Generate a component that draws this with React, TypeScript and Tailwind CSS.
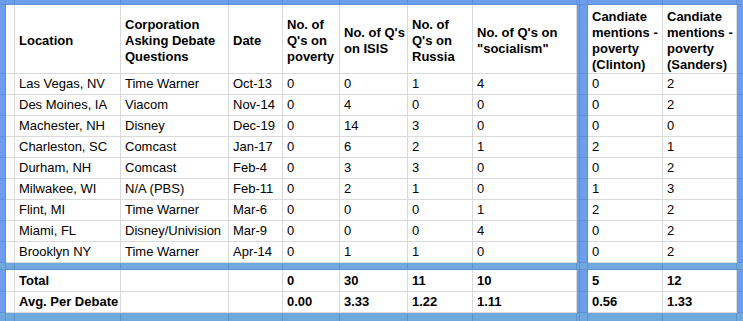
import React from "react";

type Kind = "w" | "vb" | "hb";

const colKinds: ("w" | "b")[] = ["b", "w", "w", "w", "w", "w", "w", "w", "w", "b", "b", "w", "w", "b"];

const header: string[][] = [
  [],
  [],
  ["Location"],
  ["Corporation", "Asking Debate", "Questions"],
  ["Date"],
  ["No. of", "Q's on", "poverty"],
  ["No. of Q's", "on ISIS"],
  ["No. of", "Q's on", "Russia"],
  ["No. of Q's on", "\"socialism\""],
  [],
  [],
  ["Candiate", "mentions -", "poverty", "(Clinton)"],
  ["Candiate", "mentions -", "poverty", "(Sanders)"],
  [],
];

const data: string[][] = [
  ["Las Vegas, NV", "Time Warner", "Oct-13", "0", "0", "1", "4", "0", "2"],
  ["Des Moines, IA", "Viacom", "Nov-14", "0", "4", "0", "0", "0", "2"],
  ["Machester, NH", "Disney", "Dec-19", "0", "14", "3", "0", "0", "0"],
  ["Charleston, SC", "Comcast", "Jan-17", "0", "6", "2", "1", "2", "1"],
  ["Durham, NH", "Comcast", "Feb-4", "0", "3", "3", "0", "0", "2"],
  ["Milwakee, WI", "N/A (PBS)", "Feb-11", "0", "2", "1", "0", "1", "3"],
  ["Flint, MI", "Time Warner", "Mar-6", "0", "0", "0", "1", "2", "2"],
  ["Miami, FL", "Disney/Univision", "Mar-9", "0", "0", "0", "4", "0", "2"],
  ["Brooklyn NY", "Time Warner", "Apr-14", "0", "1", "1", "0", "0", "2"],
];

const totals = ["Total", "", "", "0", "30", "11", "10", "5", "12"];
const avgs = ["Avg. Per Debate", "", "", "0.00", "3.33", "1.22", "1.11", "0.56", "1.33"];

// map a 9-value data row into 14 columns
function expand(vals: string[]): string[] {
  return ["", "", vals[0], vals[1], vals[2], vals[3], vals[4], vals[5], vals[6], "", "", vals[7], vals[8], ""];
}

function Cell({
  kind,
  lastCol,
  lastRow,
  children,
  variant,
}: {
  kind: Kind;
  lastCol: boolean;
  lastRow: boolean;
  children?: React.ReactNode;
  variant: "head" | "body" | "bold" | "none";
}) {
  const bg =
    kind === "w"
      ? "bg-white border-[#dadada]"
      : kind === "vb"
      ? "bg-[#6d9eeb] border-[#5e8fdc]"
      : "bg-[#6fa8dc] border-[#5d95cb]";
  const br = lastCol ? "" : "border-r";
  const bb = lastRow ? "" : "border-b";
  const layout =
    variant === "head"
      ? "flex flex-col justify-center pt-[3px] pl-[4px] font-bold leading-[16px]"
      : variant === "body"
      ? "flex items-end pb-[2px] pl-[4px] leading-[16px]"
      : variant === "bold"
      ? "flex items-end pb-[2px] pl-[4px] font-bold leading-[16px]"
      : "";
  return (
    <div className={`${bg} ${br} ${bb} ${layout} overflow-hidden whitespace-nowrap`}>{children}</div>
  );
}

export default function App() {
  const rows: { type: "topblue" | "head" | "body" | "band" | "bold" | "bottom"; vals?: string[] }[] = [
    { type: "topblue" },
    { type: "head" },
    ...data.map((d) => ({ type: "body" as const, vals: expand(d) })),
    { type: "band" },
    { type: "bold", vals: expand(totals) },
    { type: "bold", vals: expand(avgs) },
    { type: "bottom" },
  ];

  return (
    <div
      className="w-[743px] h-[321px] overflow-hidden text-[13px] text-black"
      style={{ fontFamily: '"Liberation Sans", Arial, sans-serif' }}
    >
      <div className="grid grid-cols-[6px_9px_106px_108px_54px_57px_68px_65px_104px_3px_8px_75px_74px_6px] grid-rows-[5px_69px_21px_21px_21px_21px_21px_21px_21px_21px_21px_7px_22px_21px_8px]">
        {rows.map((r, ri) =>
          colKinds.map((ck, ci) => {
            const lastCol = ci === colKinds.length - 1;
            const lastRow = ri === rows.length - 1;
            let kind: Kind = "w";
            if (ck === "b") kind = "vb";
            if (r.type === "topblue") kind = "vb";
            if (r.type === "band" || r.type === "bottom") kind = "hb";
            const key = `${ri}-${ci}`;
            if (kind !== "w" || r.type === "topblue" || r.type === "band" || r.type === "bottom") {
              return <Cell key={key} kind={kind} lastCol={lastCol} lastRow={lastRow} variant="none" />;
            }
            if (r.type === "head") {
              const lines = header[ci];
              return (
                <Cell key={key} kind={kind} lastCol={lastCol} lastRow={lastRow} variant="head">
                  {lines.map((l, li) => (
                    <div key={li}>{l}</div>
                  ))}
                </Cell>
              );
            }
            const v = r.vals ? r.vals[ci] : "";
            return (
              <Cell
                key={key}
                kind={kind}
                lastCol={lastCol}
                lastRow={lastRow}
                variant={r.type === "bold" ? "bold" : "body"}
              >
                {v}
              </Cell>
            );
          })
        )}
      </div>
    </div>
  );
}
